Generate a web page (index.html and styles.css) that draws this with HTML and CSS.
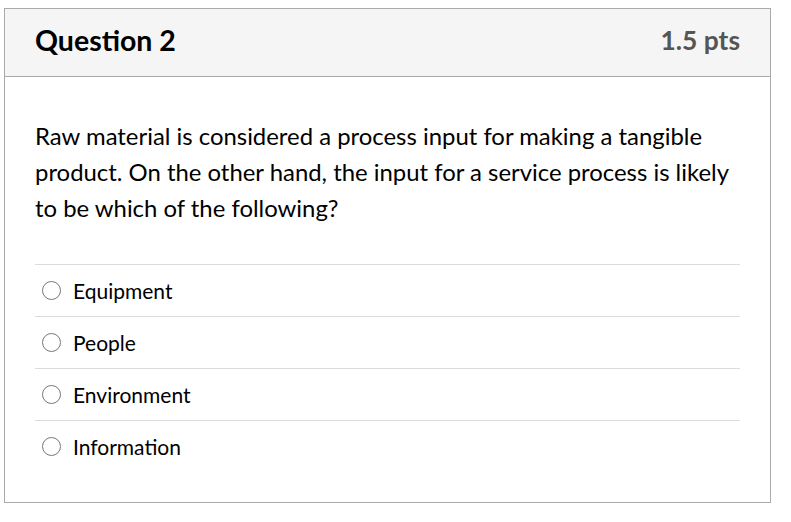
FILE: index.html
```html
<!DOCTYPE html>
<html>
<head>
<meta charset="utf-8">
<link rel="stylesheet" href="styles.css">
</head>
<body>
<div class="question">
  <div class="header">
    <h2 class="title">Question 2</h2>
    <span class="points">1.5 pts</span>
  </div>
  <div class="content">
    <p class="text">Raw material is considered a process input for making a tangible product. On the other hand, the input for a service process is likely to be which of the following?</p>
    <div class="answers">
      <label class="answer"><span class="radio"></span><span class="label">Equipment</span></label>
      <label class="answer"><span class="radio"></span><span class="label">People</span></label>
      <label class="answer"><span class="radio"></span><span class="label">Environment</span></label>
      <label class="answer"><span class="radio"></span><span class="label">Information</span></label>
    </div>
  </div>
</div>
</body>
</html>
```
FILE: styles.css
```css
html, body {
  margin: 0;
  padding: 0;
  background: #fff;
}
body {
  font-family: Lato, "Open Sans", sans-serif;
  color: #2d3b45;
}
.question {
  box-sizing: border-box;
  margin: 8px 0 0 4px;
  width: 767px;
  height: 495px;
  border: 1px solid #aaaaaa;
  display: flex;
  flex-direction: column;
}
.header {
  box-sizing: border-box;
  height: 68px;
  background: #f5f5f5;
  border-bottom: 1px solid #aaaaaa;
  display: flex;
  align-items: center;
  justify-content: space-between;
  padding: 0 30px 5px 30px;
}
.title {
  margin: 0;
  font-size: 28.5px;
  font-weight: 700;
  color: #000;
}
.points {
  font-size: 26.4px;
  font-weight: 700;
  color: #555;
}
.content {
  padding: 41px 30px 0 30px;
}
.text {
  margin: 0;
  font-size: 23.9px;
  line-height: 36px;
  color: #000;
}
.answers {
  margin-top: 38px;
  display: flex;
  flex-direction: column;
}
.answer {
  box-sizing: border-box;
  height: 52px;
  border-top: 1px solid #dcdcdc;
  display: flex;
  align-items: center;
  padding-left: 7px;
  gap: 12px;
}
.radio {
  box-sizing: border-box;
  width: 19px;
  height: 19px;
  border: 1.5px solid #777;
  border-radius: 50%;
  background: #fff;
}
.label {
  font-size: 21px;
  color: #000;
}
```
